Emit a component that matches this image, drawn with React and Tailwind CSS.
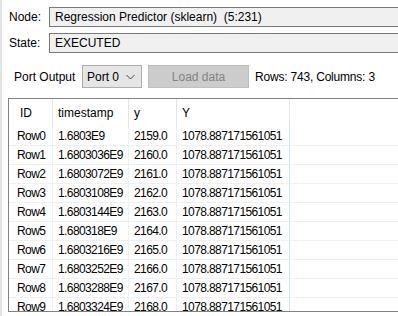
import React from "react";

const rows = [
  ["Row0", "1.6803E9", "2159.0"],
  ["Row1", "1.6803036E9", "2160.0"],
  ["Row2", "1.6803072E9", "2161.0"],
  ["Row3", "1.6803108E9", "2162.0"],
  ["Row4", "1.6803144E9", "2163.0"],
  ["Row5", "1.680318E9", "2164.0"],
  ["Row6", "1.6803216E9", "2165.0"],
  ["Row7", "1.6803252E9", "2166.0"],
  ["Row8", "1.6803288E9", "2167.0"],
  ["Row9", "1.6803324E9", "2168.0"],
];

export default function App() {
  return (
    <div
      className="w-[398px] h-[316px] bg-white overflow-hidden text-[12px] text-black border-l-2 border-[#e3e3e3] flex flex-col"
      style={{ fontFamily: '"Liberation Sans", Arial, sans-serif' }}
    >
      <div className="flex items-center h-[20px] mt-[7px]">
        <div className="w-[47px] pl-[7px]">Node:</div>
        <div className="flex-1 h-[20px] bg-[#f0f0f0] border-t border-b border-l border-[#7a7a7a] flex items-center pl-[5px] whitespace-pre">
          Regression Predictor (sklearn)  (5:231)
        </div>
      </div>
      <div className="flex items-center h-[20px] mt-[6px]">
        <div className="w-[47px] pl-[7px]">State:</div>
        <div className="flex-1 h-[20px] bg-[#f0f0f0] border-t border-b border-l border-[#7a7a7a] flex items-center pl-[5px]">
          EXECUTED
        </div>
      </div>
      <div className="flex items-center h-[23px] mt-[12px]">
        <div className="w-[80px] pl-[12px]">Port Output</div>
        <div className="w-[60px] h-[23px] bg-[#e5e5e5] border border-[#adadad] flex items-center pl-[4px] pr-[5px] justify-between">
          <span>Port 0</span>
          <svg width="9" height="6" viewBox="0 0 9 6" className="mr-[1px]">
            <path d="M0.5 1 L4.5 5 L8.5 1" fill="none" stroke="#444" strokeWidth="1" />
          </svg>
        </div>
        <div className="w-[101px] h-[23px] ml-[6px] bg-[#cccccc] border border-[#bfbfbf] flex items-center justify-center text-[#838383]">
          Load data
        </div>
        <div className="ml-[6px] tracking-[-0.2px]">Rows: 743, Columns: 3</div>
      </div>
      <div className="mt-[10px] ml-[6px] flex-1 border-t border-l border-b border-[#828282] mb-[4px] overflow-hidden">
        <div className="flex h-[28px] items-center">
          <div className="w-[44px] h-full flex items-center pl-[11px] border-r border-[#e5e5e5]">ID</div>
          <div className="w-[76px] h-full flex items-center pl-[5px] border-r border-[#e5e5e5]">timestamp</div>
          <div className="w-[48px] h-full flex items-center pl-[5px] border-r border-[#e5e5e5]">y</div>
          <div className="w-[113px] h-full flex items-center pl-[5px] border-r border-[#e5e5e5]">Y</div>
        </div>
        {rows.map((r) => (
          <div key={r[0]} className="flex h-[19px] border-b border-[#f0f0f0] text-[12px] tracking-[-0.6px]">
            <div className="w-[44px] h-full flex items-center pl-[8px] border-r border-[#f0f0f0]">{r[0]}</div>
            <div className="w-[76px] h-full flex items-center pl-[5px] border-r border-[#f0f0f0]">{r[1]}</div>
            <div className="w-[48px] h-full flex items-center pl-[5px] border-r border-[#f0f0f0]">{r[2]}</div>
            <div className="w-[113px] h-full flex items-center pl-[5px] border-r border-[#cce4f7]">1078.887171561051</div>
          </div>
        ))}
      </div>
    </div>
  );
}
